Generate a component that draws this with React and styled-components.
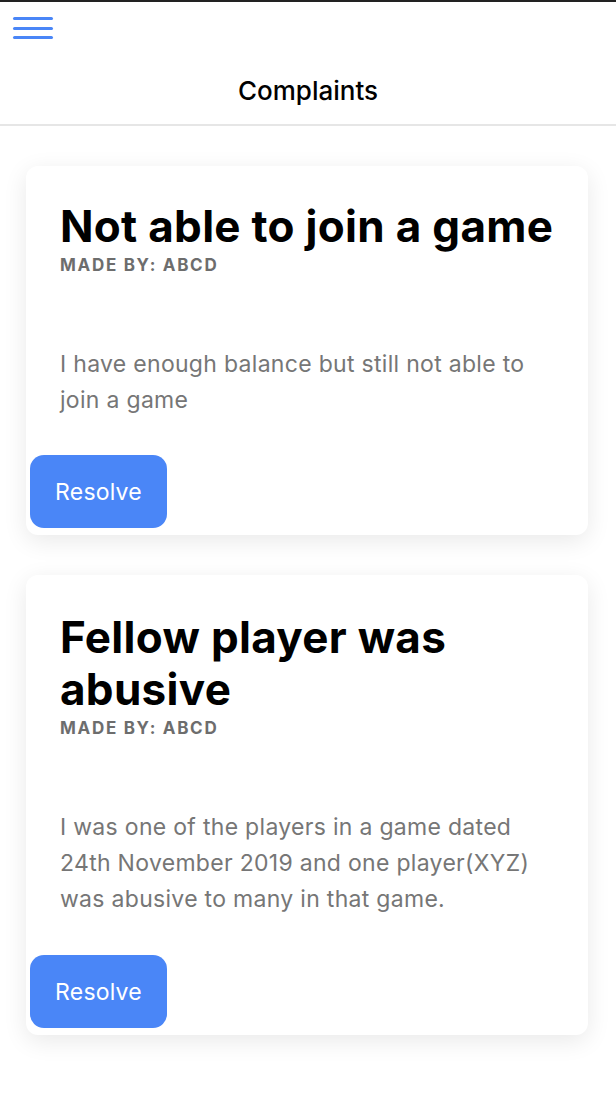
import React from 'react';
import styled, { createGlobalStyle } from 'styled-components';

const GlobalStyle = createGlobalStyle`
  body {
    margin: 0;
    background: #ffffff;
    font-family: Inter, "Noto Sans", sans-serif;
  }
`;

const complaints = [
  {
    title: 'Not able to join a game',
    madeBy: 'ABCD',
    text: 'I have enough balance but still not able to join a game',
  },
  {
    title: 'Fellow player was abusive',
    madeBy: 'ABCD',
    text: 'I was one of the players in a game dated 24th November 2019 and one player(XYZ) was abusive to many in that game.',
  },
];

const Page = styled.div`
  border-top: 2px solid #222222;
  min-height: 1094px;
`;

const Header = styled.header`
  display: flex;
  flex-direction: column;
  border-bottom: 2px solid #e6e6e6;
  height: 122px;
`;

const MenuButton = styled.button`
  display: flex;
  flex-direction: column;
  gap: 6.6px;
  width: 40px;
  margin: 15px 0 0 13px;
  padding: 0;
  border: none;
  background: none;
`;

const MenuLine = styled.span`
  display: block;
  height: 3px;
  border-radius: 2px;
  background: #4a86f7;
`;

const HeaderTitle = styled.h1`
  margin: 37px 0 0;
  text-align: center;
  font-size: 26px;
  line-height: 30px;
  font-weight: 500;
  color: #000;
  letter-spacing: 0;
`;

const List = styled.main`
  display: flex;
  flex-direction: column;
  gap: 40px;
  padding: 40px 28px 40px 26px;
`;

const Card = styled.section`
  background: #fff;
  border-radius: 12px;
  box-shadow: 0 6px 24px rgba(0, 0, 0, 0.09);
  padding: 0 4px 7px;
`;

const Body = styled.div`
  padding: ${p => p.top}px 28px 0 30px;
`;

const Title = styled.h2`
  margin: 0;
  font-size: 44px;
  line-height: 52px;
  font-weight: 700;
  color: #000;
  letter-spacing: 0.3px;
`;

const MadeBy = styled.div`
  margin-top: 3px;
  font-size: 17px;
  line-height: 20px;
  font-weight: 700;
  color: #6d6d6d;
  letter-spacing: 1.7px;
  text-transform: uppercase;
`;

const Description = styled.p`
  margin: 71px 0 0;
  font-size: 23px;
  line-height: 36px;
  color: #767676;
  letter-spacing: 0.3px;
`;

const ResolveButton = styled.button`
  margin-top: ${p => p.gap}px;
  width: 137px;
  height: 73px;
  border: none;
  border-radius: 14px;
  background: #4a86f7;
  color: #fff;
  font-family: Inter, sans-serif;
  font-size: 23px;
  letter-spacing: 0.2px;
`;

export default function App() {
  return (
    <Page>
      <GlobalStyle />
      <Header>
        <MenuButton aria-label="menu">
          <MenuLine />
          <MenuLine />
          <MenuLine />
        </MenuButton>
        <HeaderTitle>Complaints</HeaderTitle>
      </Header>
      <List>
        {complaints.map((c, i) => (
          <Card key={i}>
            <Body top={i === 0 ? 34 : 36}>
              <Title>{c.title}</Title>
              <MadeBy>Made by: {c.madeBy}</MadeBy>
              <Description>{c.text}</Description>
            </Body>
            <ResolveButton gap={i === 0 ? 37 : 38}>Resolve</ResolveButton>
          </Card>
        ))}
      </List>
    </Page>
  );
}
